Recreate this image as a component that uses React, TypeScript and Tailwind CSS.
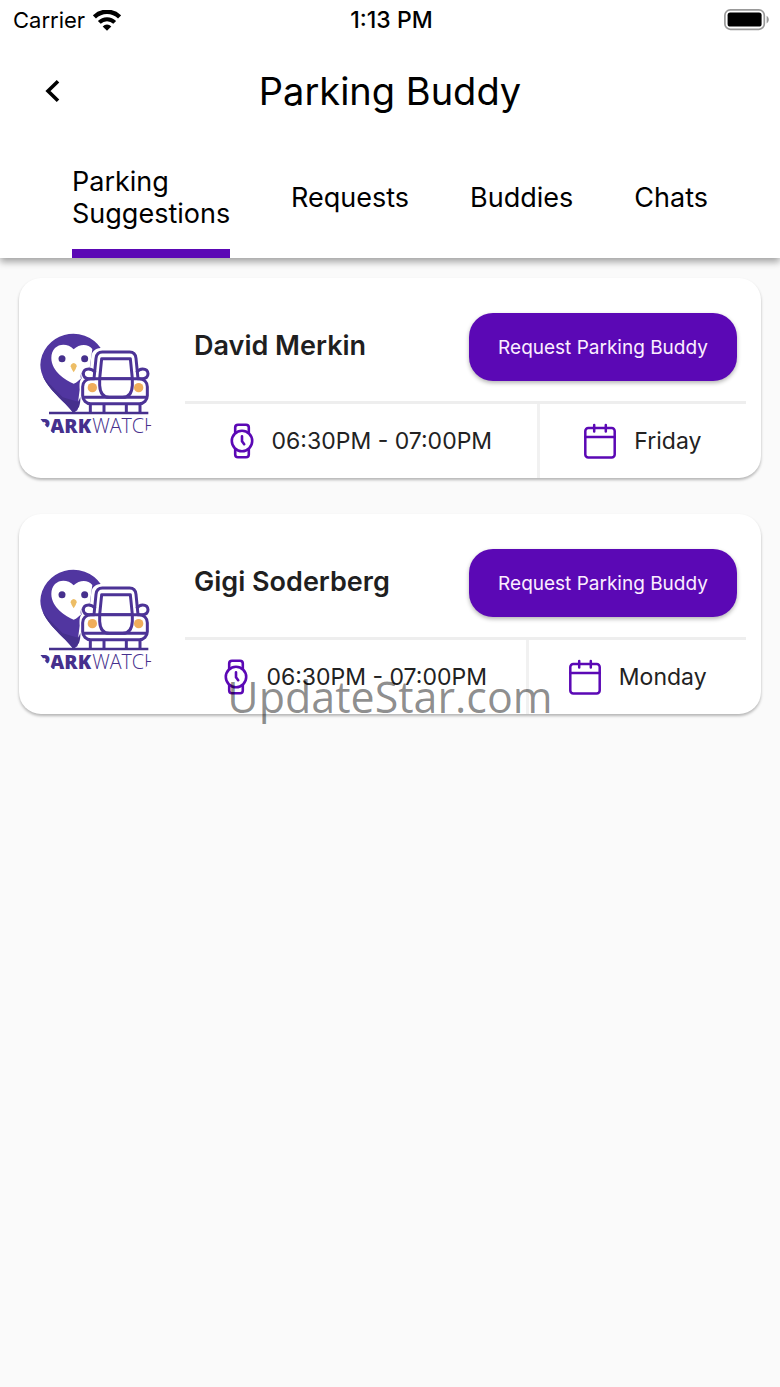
import { clsx } from 'clsx';

interface Suggestion {
  name: string;
  time: string;
  day: string;
}

const tabs = ['Parking Suggestions', 'Requests', 'Buddies', 'Chats'];

const suggestions: Suggestion[] = [
  { name: 'David Merkin', time: '06:30PM - 07:00PM', day: 'Friday' },
  { name: 'Gigi Soderberg', time: '06:30PM - 07:00PM', day: 'Monday' },
];

function WifiIcon() {
  return (
    <svg viewBox="0 0 28 21" className="h-[21px] w-7" aria-hidden="true">
      <path d="M1.4 6.9a18 18 0 0 1 25.2 0" fill="none" stroke="#000" strokeWidth="4.4" />
      <path d="M6.3 12.4a10.8 10.8 0 0 1 15.4 0" fill="none" stroke="#000" strokeWidth="4" />
      <path d="M14 20.8l-4.3-4.4a6 6 0 0 1 8.6 0z" />
    </svg>
  );
}

function BatteryIcon() {
  return (
    <svg viewBox="0 0 46 22" className="h-[22px] w-[46px]" aria-hidden="true">
      <rect x="0.9" y="0.9" width="39.4" height="19.4" rx="5.4" fill="none" stroke="#999" strokeWidth="1.7" />
      <rect x="3.6" y="3.6" width="34" height="14" rx="2.6" />
      <path d="M42.6 6.8a4.4 4.4 0 0 1 0 7.6z" fill="#999" />
    </svg>
  );
}

function WatchIcon() {
  return (
    <svg viewBox="0 0 24 36" className="h-9 w-6" fill="none" stroke="#5b08b5" strokeWidth="2.6" strokeLinejoin="round" strokeLinecap="round" aria-hidden="true">
      <circle cx="12" cy="18" r="10.2" />
      <path d="M5.2 9.8V4.6a2.8 2.8 0 0 1 2.8-2.8h8a2.8 2.8 0 0 1 2.8 2.8v5.2" />
      <path d="M5.2 26.2v5.2A2.8 2.8 0 0 0 8 34.2h8a2.8 2.8 0 0 0 2.8-2.8v-5.2" />
      <path d="M12 13.2v5l2.2 3" />
    </svg>
  );
}

function CalendarIcon() {
  return (
    <svg viewBox="0 0 32 36" className="h-9 w-8" fill="none" stroke="#5b08b5" strokeWidth="2.5" strokeLinecap="round" aria-hidden="true">
      <rect x="1.3" y="5" width="29.4" height="29.4" rx="3" />
      <path d="M1.5 14h29M10.2 2v6.4M21.8 2v6.4" />
    </svg>
  );
}

function ParkWatchLogo() {
  return (
    <svg viewBox="30 30 339 330" className="mt-3 h-[110px] w-[113px] shrink-0" role="img" aria-label="ParkWatch">
      <defs>
        <clipPath id="avatar">
          <circle cx="205" cy="185" r="208" />
        </clipPath>
      </defs>
      <g clipPath="url(#avatar)">
        {/* owl pin */}
        <path d="M130 282C106 246 31 198 31 137a99 97 0 0 1 181-50c-17 2-25 9-28 25l-4 35c-18 0-31 15-25 31-7 8-7 20-6 34l-4 32c2 12 1 22-3 30z" fill="#5136a0" />
        <path d="M38 169c15 24 39 43 60 66l46 13c3-4 5-9 7-14 1 10-1 22-4 30l-17 18C106 247 52 212 38 169z" fill="#46308d" />
        <path d="M131 194C108 185 64 157 64 117c0-41 43-51 67-26 17-17 43-18 56-1l-4 29-4 29c-18 0-31 15-26 31-6 3-12 12-22 15z" fill="#fff" />
        <circle cx="96" cy="119" r="10.5" fill="#46308d" />
        <circle cx="164" cy="119" r="10.5" fill="#46308d" />
        <path d="M131 132q9 2 9 10-2 9-9 18-7-9-9-18 0-8 9-10z" fill="#edbd65" />
        {/* car */}
        <g fill="none" stroke="#4c3396" strokeWidth="9" strokeLinejoin="round">
          <path d="M192 179l6-61q2-19 19-19h82q17 0 19 19l6 61" fill="#fff" />
          <path d="M209 179l6-60h86l6 60z" />
          <rect x="158" y="179" width="194" height="75" rx="24" fill="#fff" />
          <path d="M209 181v18q2 36 29 36h40q27 0 29-36v-18" />
          <path d="M159 235h192M194 179H178q-18-1-18-15 1-14 16-14 11 0 20 10M322 179h14q18-1 18-15-1-14-16-14-11 0-18 10" />
          <path d="M181 257v24M222 257v24M289 257v24M330 257v24" />
        </g>
        <circle cx="187" cy="206" r="14" fill="#f0ad5b" />
        <circle cx="326" cy="206" r="14" fill="#f0ad5b" />
        <path d="M57 282h298" stroke="#46308d" strokeWidth="7" />
        <text x="23" y="342" fontSize="59" fill="#46308d" className="font-['Open_Sans',sans-serif]">
          <tspan fontWeight="800">PARK</tspan>
          <tspan fontWeight="300" dx="3">WATCH</tspan>
        </text>
      </g>
    </svg>
  );
}

function SuggestionCard({ name, time, day }: Suggestion) {
  return (
    <li className="flex h-[200px] items-center rounded-[22px] bg-white pl-[21px] pr-[15px] shadow-[0_2px_3px_rgba(0,0,0,0.28)]">
      <ParkWatchLogo />
      <div className="ml-8 flex h-full flex-1 flex-col">
        <div className="flex h-[123px] items-center justify-between pl-[9px] pr-[9px] pt-[14px]">
          <h2 className="text-[27px] font-semibold text-[#1f1f1f]">{name}</h2>
          <button
            type="button"
            className="h-[68px] w-[268px] rounded-3xl bg-[#5b08b5] pt-[3px] text-[19px] text-[#fbeeff] shadow-[0_2px_4px_rgba(0,0,0,0.3)]"
          >
            Request Parking Buddy
          </button>
        </div>
        <div className="flex flex-1 border-t-[3px] border-[#eeeeee]">
          <div className="flex flex-auto items-center justify-center gap-[18px] border-r-[3px] border-[#f1f1f1]">
            <WatchIcon />
            <span className="text-[23px] text-[#222]">{time}</span>
          </div>
          <div className="flex flex-auto items-center justify-center gap-[18px]">
            <CalendarIcon />
            <span className="text-[23px] text-[#222]">{day}</span>
          </div>
        </div>
      </div>
    </li>
  );
}

export default function App() {
  return (
    <div className="relative min-h-screen bg-[#fafafa] font-['Inter',sans-serif] text-black">
      <header className="bg-white shadow-[0_4px_7px_rgba(0,0,0,0.35)]">
        <div className="grid h-10 grid-cols-3 items-center pl-[13px] pr-[10px]">
          <div className="flex items-center gap-2 text-[22px]">
            Carrier
            <WifiIcon />
          </div>
          <span className="text-center text-[23px] font-medium">1:13 PM</span>
          <div className="flex justify-end">
            <BatteryIcon />
          </div>
        </div>
        <div className="grid h-[102px] grid-cols-[60px_1fr_60px] items-center px-6">
          <button type="button" aria-label="Back" className="flex h-12 items-center pl-5">
            <svg viewBox="0 0 16 24" className="h-6 w-4" fill="none" stroke="#000" strokeWidth="3.6" aria-hidden="true">
              <path d="M14 2.2L4 12l10 9.8" />
            </svg>
          </button>
          <h1 className="text-center text-[38px]">Parking Buddy</h1>
        </div>
        <div role="tablist" className="flex h-[116px] justify-between px-[72px]">
          {tabs.map((tab, i) => (
            <button
              key={tab}
              type="button"
              role="tab"
              aria-selected={i === 0}
              className={clsx(
                'border-b-[9px] pt-1 text-left text-[27px] leading-8',
                i === 0 ? 'w-[158px] border-[#5b08b5]' : 'border-transparent',
              )}
            >
              {tab}
            </button>
          ))}
        </div>
      </header>
      <main>
        <ul className="flex flex-col gap-9 px-[19px] py-5">
          {suggestions.map((suggestion) => (
            <SuggestionCard key={suggestion.name} {...suggestion} />
          ))}
        </ul>
      </main>
      <p className="pointer-events-none absolute inset-x-0 top-[667px] text-center font-['Open_Sans',sans-serif] text-[43px] leading-[60px] text-black/45">
        UpdateStar.com
      </p>
    </div>
  );
}
